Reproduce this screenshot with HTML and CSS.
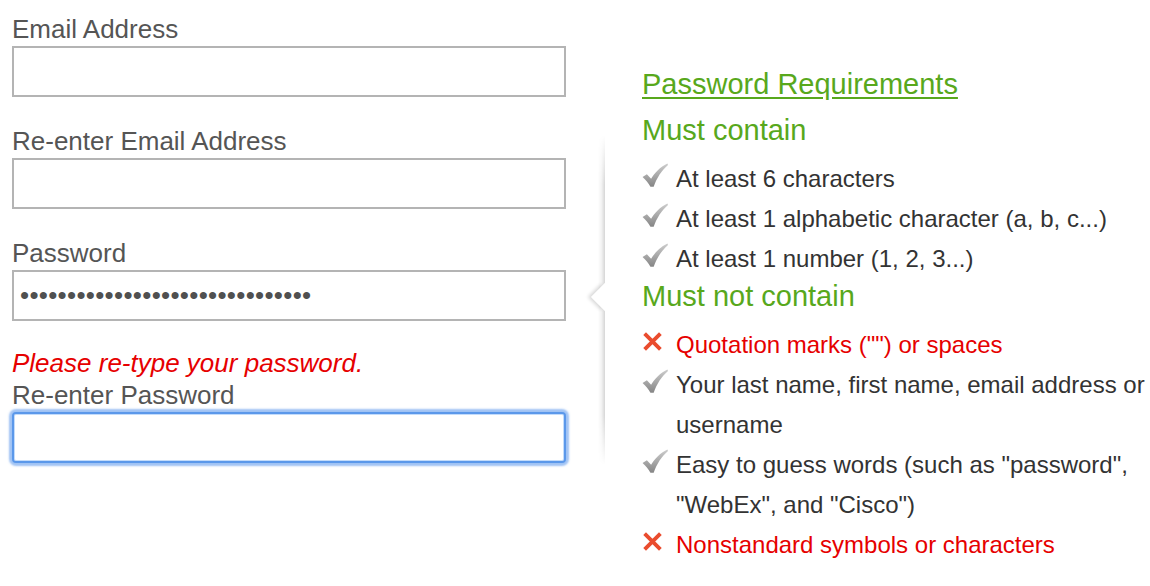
FILE: index.html
```html
<!DOCTYPE html>
<html lang="en">
<head>
<meta charset="utf-8">
<title>Create account</title>
<link rel="stylesheet" href="styles.css">
</head>
<body>
<div class="page">
  <form class="form">
    <div class="field">
      <label class="label" for="email">Email Address</label>
      <input class="input" id="email" type="text">
    </div>
    <div class="field">
      <label class="label" for="email2">Re-enter Email Address</label>
      <input class="input" id="email2" type="text">
    </div>
    <div class="field">
      <label class="label" for="pw">Password</label>
      <input class="input input-pw" id="pw" type="password" value="abcdefghijklmnopqrstuvwxyz12345">
    </div>
    <div class="field field-last">
      <div class="error">Please re-type your password.</div>
      <label class="label" for="pw2">Re-enter Password</label>
      <input class="input input-focus" id="pw2" type="password">
    </div>
  </form>

  <aside class="panel">
    <div class="panel-edge"></div>
    <div class="panel-arrow"></div>
    <a class="req-title" href="#">Password Requirements</a>
    <div class="req-head">Must contain</div>
    <ul class="req-list">
      <li class="req ok"><svg class="ico" viewBox="0 0 24 24"><defs><linearGradient id="g1" x1="0" y1="0" x2="0" y2="1"><stop offset="0" stop-color="#cdcdcd"/><stop offset="1" stop-color="#858585"/></linearGradient></defs><path d="M0.5 13 L4.5 10.3 L8.4 14.6 C12 8.8 16.5 4 23.5 0.5 L24 1.8 C18 7 13.8 13.5 10.8 22 L7.8 22 C5.8 18.5 3.5 15.5 0.5 13 Z" fill="url(#g1)"/></svg><span>At least 6 characters</span></li>
      <li class="req ok"><svg class="ico" viewBox="0 0 24 24"><path d="M0.5 13 L4.5 10.3 L8.4 14.6 C12 8.8 16.5 4 23.5 0.5 L24 1.8 C18 7 13.8 13.5 10.8 22 L7.8 22 C5.8 18.5 3.5 15.5 0.5 13 Z" fill="url(#g1)"/></svg><span>At least 1 alphabetic character (a, b, c...)</span></li>
      <li class="req ok"><svg class="ico" viewBox="0 0 24 24"><path d="M0.5 13 L4.5 10.3 L8.4 14.6 C12 8.8 16.5 4 23.5 0.5 L24 1.8 C18 7 13.8 13.5 10.8 22 L7.8 22 C5.8 18.5 3.5 15.5 0.5 13 Z" fill="url(#g1)"/></svg><span>At least 1 number (1, 2, 3...)</span></li>
    </ul>
    <div class="req-head">Must not contain</div>
    <ul class="req-list">
      <li class="req bad"><svg class="ico ico-x" viewBox="0 0 24 24"><path d="M3 3 L21 21 M21 3 L3 21" stroke="#ea4c2e" stroke-width="4.4" stroke-linecap="butt"/></svg><span>Quotation marks ("") or spaces</span></li>
      <li class="req ok"><svg class="ico" viewBox="0 0 24 24"><path d="M0.5 13 L4.5 10.3 L8.4 14.6 C12 8.8 16.5 4 23.5 0.5 L24 1.8 C18 7 13.8 13.5 10.8 22 L7.8 22 C5.8 18.5 3.5 15.5 0.5 13 Z" fill="url(#g1)"/></svg><span>Your last name, first name, email address or username</span></li>
      <li class="req ok"><svg class="ico" viewBox="0 0 24 24"><path d="M0.5 13 L4.5 10.3 L8.4 14.6 C12 8.8 16.5 4 23.5 0.5 L24 1.8 C18 7 13.8 13.5 10.8 22 L7.8 22 C5.8 18.5 3.5 15.5 0.5 13 Z" fill="url(#g1)"/></svg><span>Easy to guess words (such as "password", "WebEx", and "Cisco")</span></li>
      <li class="req bad"><svg class="ico ico-x" viewBox="0 0 24 24"><path d="M3 3 L21 21 M21 3 L3 21" stroke="#ea4c2e" stroke-width="4.4" stroke-linecap="butt"/></svg><span>Nonstandard symbols or characters</span></li>
    </ul>
  </aside>
</div>
</body>
</html>
```

FILE: styles.css
```css
* { box-sizing: border-box; }
html, body {
  margin: 0;
  background: #fff;
}
body {
  font-family: "Liberation Sans", Arial, Helvetica, sans-serif;
  overflow: hidden;
}
.page {
  display: flex;
  align-items: flex-start;
  width: 1150px;
  height: 586px;
}
.form {
  width: 578px;
  padding: 14px 0 0 12px;
  display: flex;
  flex-direction: column;
  flex-shrink: 0;
}
.field {
  display: flex;
  flex-direction: column;
  gap: 2px;
  margin-bottom: 29px;
}
.field-last { margin-bottom: 0; gap: 0; }
.field-last .label { margin-bottom: 2px; }
.label {
  font-size: 26px;
  line-height: 30px;
  color: #555;
}
.error {
  font-size: 26px;
  line-height: 30px;
  font-style: italic;
  color: #e60000;
  margin-top: -2px;
  margin-bottom: 2px;
}
.input {
  width: 554px;
  height: 51px;
  border: 2px solid #b4b4b4;
  background: #fff;
  margin: 0;
  padding: 0 6px;
  font-family: "Liberation Sans", Arial, sans-serif;
  font-size: 26px;
  color: #555;
  outline: none;
}
.input-pw {
  letter-spacing: 0.3px;
  color: #505050;
}
.input-focus {
  border: 2px solid #5b98ea;
  border-radius: 4px;
  box-shadow: 0 0 2px 3px rgba(120, 170, 240, 0.7), inset 0 0 0 1px rgba(170, 205, 250, 0.7);
}
.panel {
  position: relative;
  margin-left: 27px;
  padding: 67px 0 0 37px;
  flex: 1;
  height: 586px;
}
.panel-edge {
  position: absolute;
  left: -7px;
  top: 135px;
  width: 7px;
  height: 330px;
  background: linear-gradient(to right, rgba(0,0,0,0) 0%, rgba(0,0,0,0.05) 50%, rgba(0,0,0,0.16) 100%);
  -webkit-mask-image: linear-gradient(to bottom, transparent 0%, #000 15%, #000 85%, transparent 100%);
  mask-image: linear-gradient(to bottom, transparent 0%, #000 15%, #000 85%, transparent 100%);
}
.panel-arrow {
  position: absolute;
  left: -10px;
  top: 287px;
  width: 20px;
  height: 20px;
  background: #fff;
  transform: rotate(45deg);
  box-shadow: -3px 3px 4px -1px rgba(0,0,0,0.16);
}
.req-title {
  display: block;
  font-size: 29px;
  line-height: 34px;
  color: #58a81c;
  text-decoration: underline;
  text-underline-offset: 3px;
  margin-bottom: 12px;
  position: relative;
}
.req-head {
  font-size: 29px;
  line-height: 34px;
  color: #58a81c;
  margin-bottom: 12px;
  position: relative;
}
.req-list {
  list-style: none;
  margin: 0;
  padding: 0;
  position: relative;
}
.req {
  display: flex;
  align-items: flex-start;
  font-size: 24px;
  line-height: 40px;
  color: #333;
}
.req.bad { color: #e60000; }
.req span { flex: 1; }
.ico {
  width: 26px;
  height: 26px;
  margin: 4px 8px 0 0;
  flex-shrink: 0;
}
.ico-x {
  width: 21px;
  height: 21px;
  margin: 6px 13px 0 0;
}
```
